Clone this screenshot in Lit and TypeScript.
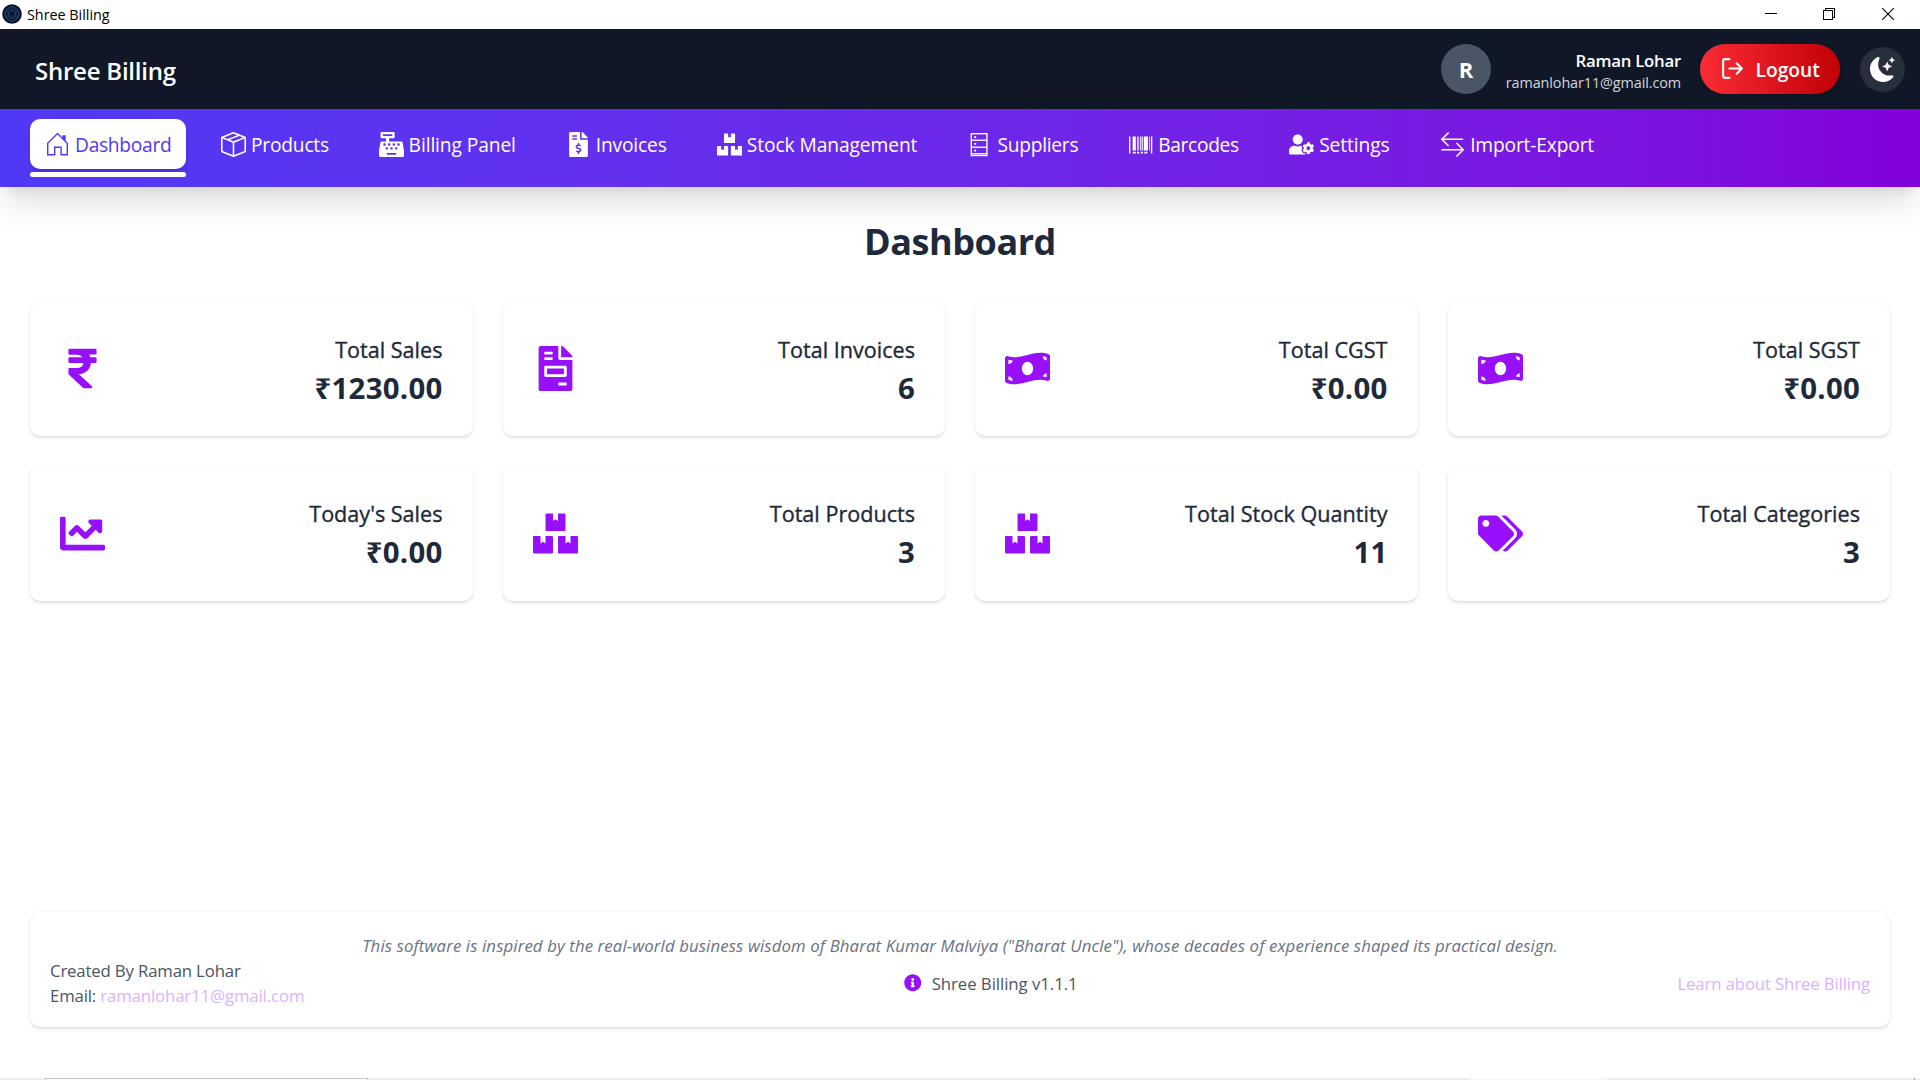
import { LitElement, html, svg, css, TemplateResult } from "lit";

type Glyph = { box: string; body: TemplateResult };

const glyph = (box: string, ...paths: string[]): Glyph => ({
  box,
  body: svg`${paths.map((d) => svg`<path fill="currentColor" d=${d}></path>`)}`,
});

const icons: Record<string, Glyph> = {
  home: {
    box: "0 0 25 25",
    body: svg`<path fill="none" stroke="currentColor" stroke-width="1.4" d="M2.7 22.8V11.2L12.5 1.6l9.8 9.6v11.6h-6.2v-7.6H9.7v7.6z"></path>
      <path fill="currentColor" d="M17.3 3.2h3.4v6.6l-3.4-3.2z"></path>`,
  },
  box: glyph(
    "0 0 16 16",
    "M8.186 1.113a.5.5 0 0 0-.372 0L1.846 3.5l2.404.961L10.404 2l-2.218-.887zm3.564 1.426L5.596 5 8 5.961 14.154 3.5l-2.404-.961zm3.25 1.7-6.5 2.6v7.922l6.5-2.6V4.24zM7.5 14.762V6.838L1 4.239v7.923l6.5 2.6zM7.443.184a1.5 1.5 0 0 1 1.114 0l7.129 2.852A.5.5 0 0 1 16 3.5v8.662a1 1 0 0 1-.629.928l-7.185 2.874a.5.5 0 0 1-.372 0L.63 13.09a1 1 0 0 1-.63-.928V3.5a.5.5 0 0 1 .314-.464L7.443.184z"
  ),
  register: glyph(
    "0 0 512 512",
    "M511.1 378.8l-26.7-160c-2.6-15.4-15.9-26.7-31.6-26.7H208v-64h96c8.8 0 16-7.2 16-16V16c0-8.8-7.2-16-16-16H48c-8.8 0-16 7.2-16 16v96c0 8.8 7.2 16 16 16h96v64H59.1c-15.6 0-29 11.3-31.6 26.7L.8 378.7c-.6 3.5-.9 7-.9 10.5V480c0 17.7 14.3 32 32 32h448c17.7 0 32-14.3 32-32v-90.7c.1-3.5-.2-7-.8-10.5zM280 248c0-8.8 7.2-16 16-16h16c8.8 0 16 7.2 16 16v16c0 8.8-7.2 16-16 16h-16c-8.8 0-16-7.2-16-16v-16zm-32 64h16c8.8 0 16 7.2 16 16v16c0 8.8-7.2 16-16 16h-16c-8.8 0-16-7.2-16-16v-16c0-8.8 7.2-16 16-16zm-32-80c8.8 0 16 7.2 16 16v16c0 8.8-7.2 16-16 16h-16c-8.8 0-16-7.2-16-16v-16c0-8.8 7.2-16 16-16h16zM80 80V48h192v32H80zm40 200h-16c-8.8 0-16-7.2-16-16v-16c0-8.8 7.2-16 16-16h16c8.8 0 16 7.2 16 16v16c0 8.8-7.2 16-16 16zm16 64v-16c0-8.8 7.2-16 16-16h16c8.8 0 16 7.2 16 16v16c0 8.8-7.2 16-16 16h-16c-8.8 0-16-7.2-16-16zm216 112c0 4.4-3.6 8-8 8H168c-4.4 0-8-3.6-8-8v-16c0-4.4 3.6-8 8-8h176c4.4 0 8 3.6 8 8v16zm24-112c0 8.8-7.2 16-16 16h-16c-8.8 0-16-7.2-16-16v-16c0-8.8 7.2-16 16-16h16c8.8 0 16 7.2 16 16v16zm48-80c0 8.8-7.2 16-16 16h-16c-8.8 0-16-7.2-16-16v-16c0-8.8 7.2-16 16-16h16c8.8 0 16 7.2 16 16v16z"
  ),
  invoiceDollar: glyph(
    "0 0 384 512",
    "M377 105L279.1 7c-4.5-4.5-10.6-7-17-7H256v128h128v-6.1c0-6.3-2.5-12.4-7-16.9zm-153 31V0H24C10.7 0 0 10.7 0 24v464c0 13.3 10.7 24 24 24h336c13.3 0 24-10.7 24-24V160H248c-13.2 0-24-10.8-24-24zM64 72c0-4.42 3.58-8 8-8h80c4.42 0 8 3.58 8 8v16c0 4.42-3.58 8-8 8H72c-4.42 0-8-3.58-8-8V72zm0 80v-16c0-4.42 3.58-8 8-8h80c4.42 0 8 3.58 8 8v16c0 4.42-3.58 8-8 8H72c-4.42 0-8-3.58-8-8zm144 263.88V440c0 4.42-3.58 8-8 8h-16c-4.42 0-8-3.58-8-8v-24.29c-11.29-.58-22.27-4.52-31.37-11.35-3.9-2.93-4.1-8.77-.57-12.14l11.75-11.21c2.77-2.64 6.89-2.76 10.13-.73 3.87 2.42 8.26 3.72 12.82 3.72h28.11c6.5 0 11.8-5.92 11.8-13.19 0-5.95-3.61-11.19-8.77-12.73l-45-13.5c-18.59-5.58-31.58-23.42-31.58-43.39 0-24.52 19.05-44.44 42.67-45.07V232c0-4.42 3.58-8 8-8h16c4.42 0 8 3.58 8 8v24.29c11.29.58 22.27 4.51 31.37 11.35 3.9 2.93 4.1 8.77.57 12.14l-11.75 11.21c-2.77 2.64-6.89 2.76-10.13.73-3.87-2.43-8.26-3.72-12.82-3.72h-28.11c-6.5 0-11.8 5.92-11.8 13.19 0 5.95 3.61 11.19 8.77 12.73l45 13.5c18.59 5.58 31.58 23.42 31.58 43.39 0 24.53-19.05 44.44-42.67 45.07z"
  ),
  boxes: glyph(
    "0 0 576 512",
    "M560 288h-80v96l-32-21.3-32 21.3v-96h-80c-8.8 0-16 7.2-16 16v192c0 8.8 7.2 16 16 16h224c8.8 0 16-7.2 16-16V304c0-8.8-7.2-16-16-16zm-384-64h224c8.8 0 16-7.2 16-16V16c0-8.8-7.2-16-16-16h-80v96l-32-21.3L256 96V0h-80c-8.8 0-16 7.2-16 16v192c0 8.8 7.2 16 16 16zm64 64h-80v96l-32-21.3L96 384v-96H16c-8.8 0-16 7.2-16 16v192c0 8.8 7.2 16 16 16h224c8.8 0 16-7.2 16-16V304c0-8.8-7.2-16-16-16z"
  ),
  cabinet: {
    box: "0 0 25 25",
    body: svg`<g fill="none" stroke="currentColor" stroke-width="1.4">
        <rect x="4.3" y="1.7" width="15.6" height="21.8"></rect>
        <path d="M4.3 8.3h15.6M4.3 15.2h15.6M4.3 21.8h15.6" stroke-opacity=".9"></path>
      </g>
      <g fill="currentColor"><circle cx="8.2" cy="5.2" r="1.1"></circle><circle cx="8.2" cy="11.8" r="1.1"></circle><circle cx="8.2" cy="18.6" r="1.1"></circle></g>`,
  },
  barcode: glyph(
    "0 0 25 25",
    "M1 4.4h1.4v17H1zM22.9 4.4h1.4v17h-1.4zM4.6 4.4h3.2v14H4.6zM9.2 4.4h1.4v14H9.2zM11.9 4.4h.9v14h-.9zM13.6 4.4h1.2v14h-1.2zM15.8 4.4H20v14h-4.2zM21.2 4.4h.7v14h-.7zM4.8 19.8h3v1.6h-3zM9 19.8h2.4v1.6H9zM12.9 19.8h2v1.6h-2zM16.4 19.8h3v1.6h-3z"
  ),
  userCog: glyph(
    "0 0 640 512",
    "M610.5 373.3c2.6-14.1 2.6-28.5 0-42.6l25.8-14.9c3-1.7 4.3-5.2 3.3-8.5-6.7-21.6-18.2-41.2-33.2-57.4-2.3-2.5-6-3.1-9-1.4l-25.8 14.9c-10.9-9.3-23.4-16.5-36.9-21.3v-29.8c0-3.4-2.4-6.4-5.7-7.1-22.3-5-45-4.8-66.2 0-3.3.7-5.7 3.7-5.7 7.1v29.8c-13.5 4.8-26 12-36.9 21.3l-25.8-14.9c-2.9-1.7-6.7-1.1-9 1.4-15 16.2-26.5 35.8-33.2 57.4-1 3.3.4 6.8 3.3 8.5l25.8 14.9c-2.6 14.1-2.6 28.5 0 42.6l-25.8 14.9c-3 1.7-4.3 5.2-3.3 8.5 6.7 21.6 18.2 41.1 33.2 57.4 2.3 2.5 6 3.1 9 1.4l25.8-14.9c10.9 9.3 23.4 16.5 36.9 21.3v29.8c0 3.4 2.4 6.4 5.7 7.1 22.3 5 45 4.8 66.2 0 3.3-.7 5.7-3.7 5.7-7.1v-29.8c13.5-4.8 26-12 36.9-21.3l25.8 14.9c2.9 1.7 6.7 1.1 9-1.4 15-16.2 26.5-35.8 33.2-57.4 1-3.3-.4-6.8-3.3-8.5l-25.8-14.9zM496 400.5c-26.8 0-48.5-21.8-48.5-48.5s21.8-48.5 48.5-48.5 48.5 21.8 48.5 48.5-21.7 48.5-48.5 48.5zM224 256c70.7 0 128-57.3 128-128S294.7 0 224 0 96 57.3 96 128s57.3 128 128 128zm201.2 226.5c-2.3-1.2-4.6-2.6-6.8-3.9l-7.9 4.6c-6 3.4-12.8 5.3-19.6 5.3-10.9 0-21.4-4.6-28.9-12.6-18.3-19.8-32.3-43.9-40.2-69.6-5.5-17.7 1.9-36.4 17.9-45.7l7.9-4.6c-.1-2.6-.1-5.2 0-7.8l-7.9-4.6c-16-9.2-23.4-28-17.9-45.7.9-2.9 2.2-5.8 3.2-8.7-3.8-.3-7.5-1.2-11.4-1.2h-16.7c-22.2 10.2-46.9 16-72.9 16s-50.6-5.8-72.9-16h-16.7C60.2 288 0 348.2 0 422.4V464c0 26.5 21.5 48 48 48h352c10.1 0 19.5-3.2 27.2-8.5-1.2-3.8-2-7.7-2-11.8v-9.2z"
  ),
  swap: {
    box: "0 0 25 25",
    body: svg`<path fill="none" stroke="currentColor" stroke-width="1.5" d="M8.6.6 1.8 7.3l6.8 6.7M1.8 7.3h21.4M16.4 11l6.8 6.8-6.8 6.7M23.2 17.8H1.4"></path>`,
  },
  rupee: glyph(
    "0 0 320 512",
    "M308 96c6.627 0 12-5.373 12-12V44c0-6.627-5.373-12-12-12H12C5.373 32 0 37.373 0 44v44.748c0 6.627 5.373 12 12 12h85.28c27.308 0 48.261 9.958 60.97 27.252H12c-6.627 0-12 5.373-12 12v40c0 6.627 5.373 12 12 12h158.757c-6.217 36.086-32.961 58.632-74.757 58.632H12c-6.627 0-12 5.373-12 12v53.012c0 3.349 1.4 6.546 3.861 8.818l165.052 152.356a12.001 12.001 0 0 0 8.139 3.182h82.562c10.924 0 16.166-13.408 8.139-20.818L116.871 319.906c76.499-2.34 131.144-53.395 138.318-127.906H308c6.627 0 12-5.373 12-12v-40c0-6.627-5.373-12-12-12h-58.69c-3.486-11.541-8.28-22.246-14.252-32H308z"
  ),
  invoice: glyph(
    "0 0 384 512",
    "M288 256H96v64h192v-64zm89-151L279.1 7c-4.5-4.5-10.6-7-17-7H256v128h128v-6.1c0-6.3-2.5-12.4-7-16.9zm-153 31V0H24C10.7 0 0 10.7 0 24v464c0 13.3 10.7 24 24 24h336c13.3 0 24-10.7 24-24V160H248c-13.2 0-24-10.8-24-24zM64 72c0-4.42 3.58-8 8-8h80c4.42 0 8 3.58 8 8v16c0 4.42-3.58 8-8 8H72c-4.42 0-8-3.58-8-8V72zm0 64c0-4.42 3.58-8 8-8h80c4.42 0 8 3.58 8 8v16c0 4.42-3.58 8-8 8H72c-4.42 0-8-3.58-8-8v-16zm256 304c0 4.42-3.58 8-8 8h-80c-4.42 0-8-3.58-8-8v-16c0-4.42 3.58-8 8-8h80c4.42 0 8 3.58 8 8v16zm0-200v96c0 8.84-7.16 16-16 16H80c-8.84 0-16-7.16-16-16v-96c0-8.84 7.16-16 16-16h224c8.84 0 16 7.16 16 16z"
  ),
  bill: glyph(
    "0 0 640 512",
    "M621.16 54.46C582.37 38.19 543.55 32 504.75 32c-123.17-.01-246.33 62.34-369.5 62.34-30.89 0-61.76-3.92-92.65-13.72-3.47-1.1-6.95-1.62-10.35-1.62C15.04 79 0 92.32 0 110.81v317.26c0 12.63 7.23 24.6 18.84 29.46C57.63 473.81 96.45 480 135.25 480c123.17 0 246.34-62.35 369.51-62.35 30.89 0 61.76 3.92 92.65 13.72 3.47 1.1 6.95 1.62 10.35 1.62 17.21 0 32.25-13.32 32.25-31.81V83.93c-.01-12.64-7.24-24.6-18.85-29.47zM48 132.22c20.12 5.04 41.12 7.57 62.72 8.93C104.84 170.54 79 192.69 48 192.69v-60.47zm0 285v-47.78c34.37 0 62.18 27.27 63.71 61.4-22.53-1.81-43.59-6.31-63.71-13.62zM320 352c-44.19 0-80-42.99-80-96 0-53.02 35.82-96 80-96s80 42.98 80 96c0 53.03-35.83 96-80 96zm272 27.78c-17.52-4.39-35.71-6.85-54.32-8.44 5.87-26.08 27.5-45.88 54.32-49.28v57.72zm0-236.11c-30.89-3.91-54.86-29.7-55.81-61.55 19.54 2.17 38.09 6.23 55.81 12.66v48.89z"
  ),
  chart: glyph(
    "0 0 512 512",
    "M496 384H64V80c0-8.84-7.16-16-16-16H16C7.16 64 0 71.16 0 80v336c0 17.67 14.33 32 32 32h464c8.84 0 16-7.16 16-16v-32c0-8.84-7.16-16-16-16zM464 96H345.94c-21.38 0-32.09 25.85-16.97 40.97l32.4 32.4L288 242.75l-73.37-73.37c-12.5-12.5-32.76-12.5-45.25 0l-68.69 68.69c-6.25 6.25-6.25 16.38 0 22.63l22.62 22.62c6.25 6.25 16.38 6.25 22.63 0L192 237.25l73.37 73.37c12.5 12.5 32.76 12.5 45.25 0l96-96 32.4 32.4c15.12 15.12 40.97 4.41 40.97-16.97V112c.01-8.84-7.15-16-15.99-16z"
  ),
  tags: glyph(
    "0 0 640 512",
    "M497.941 225.941L286.059 14.059A48 48 0 0 0 252.118 0H48C21.49 0 0 21.49 0 48v204.118a48 48 0 0 0 14.059 33.941l211.882 211.882c18.744 18.745 49.136 18.746 67.882 0l204.118-204.118c18.745-18.745 18.745-49.137 0-67.882zM112 160c-26.51 0-48-21.49-48-48s21.49-48 48-48 48 21.49 48 48-21.49 48-48 48zm513.941 133.823L421.823 497.941c-18.745 18.745-49.137 18.745-67.882 0l-.36-.36L527.64 323.522c16.999-16.999 26.362-39.6 26.362-63.64s-9.362-46.641-26.362-63.64L331.397 0h48.721a48 48 0 0 1 33.941 14.059l211.882 211.882c18.745 18.745 18.745 49.137 0 67.882z"
  ),
  info: glyph(
    "0 0 512 512",
    "M256 8C119.043 8 8 119.083 8 256c0 136.997 111.043 248 248 248s248-111.003 248-248C504 119.083 392.957 8 256 8zm0 110c23.196 0 42 18.804 42 42s-18.804 42-42 42-42-18.804-42-42 18.804-42 42-42zm56 254c0 6.627-5.373 12-12 12h-88c-6.627 0-12-5.373-12-12v-24c0-6.627 5.373-12 12-12h12v-64h-12c-6.627 0-12-5.373-12-12v-24c0-6.627 5.373-12 12-12h64c6.627 0 12 5.373 12 12v100h12c6.627 0 12 5.373 12 12v24z"
  ),
  logout: {
    box: "0 0 24 24",
    body: svg`<path fill="none" stroke="currentColor" stroke-width="2" stroke-linecap="round" stroke-linejoin="round" d="M9 21H5a2 2 0 0 1-2-2V5a2 2 0 0 1 2-2h4M16 17l5-5-5-5M21 12H9"></path>`,
  },
  moon: glyph(
    "0 0 16 16",
    "M6 .278a.768.768 0 0 1 .08.858 7.208 7.208 0 0 0-.878 3.46c0 4.021 3.278 7.277 7.318 7.277.527 0 1.04-.055 1.533-.16a.787.787 0 0 1 .81.316.733.733 0 0 1-.031.893A8.349 8.349 0 0 1 8.344 16C3.734 16 0 12.286 0 7.71 0 4.266 2.114 1.312 5.124.06A.752.752 0 0 1 6 .278z",
    "M10.794 3.148a.217.217 0 0 1 .412 0l.387 1.162c.173.518.579.924 1.097 1.097l1.162.387a.217.217 0 0 1 0 .412l-1.162.387a1.734 1.734 0 0 0-1.097 1.097l-.387 1.162a.217.217 0 0 1-.412 0l-.387-1.162A1.734 1.734 0 0 0 9.31 6.593l-1.162-.387a.217.217 0 0 1 0-.412l1.162-.387a1.734 1.734 0 0 0 1.097-1.097l.387-1.162zM13.863.099a.145.145 0 0 1 .274 0l.258.774c.115.346.386.617.732.732l.774.258a.145.145 0 0 1 0 .274l-.774.258a1.156 1.156 0 0 0-.732.732l-.258.774a.145.145 0 0 1-.274 0l-.258-.774a1.156 1.156 0 0 0-.732-.732l-.774-.258a.145.145 0 0 1 0-.274l.774-.258c.346-.115.617-.386.732-.732L13.863.1z"
  ),
  appMark: {
    box: "0 0 20 20",
    body: svg`<circle cx="10" cy="10" r="9.8" fill="#0b1322"></circle>
      <circle cx="10" cy="10" r="7.4" fill="#0e1f42" stroke="#173a66" stroke-width=".9" stroke-dasharray="2 1.2"></circle>
      <path fill="none" stroke="#21497a" stroke-width=".6" d="M10 2.5 16.5 6.3v7.4L10 17.5 3.5 13.7V6.3zM3.5 6.3l13 7.4M16.5 6.3l-13 7.4"></path>
      <circle cx="10" cy="10" r="3.6" fill="#0d1836" stroke="#24477c" stroke-width=".8"></circle>`,
  },
  minimize: {
    box: "0 0 12 12",
    body: svg`<path stroke="#000" stroke-width="1" d="M0 5.5h12" shape-rendering="crispEdges"></path>`,
  },
  restore: {
    box: "0 0 12 12",
    body: svg`<path fill="none" stroke="#000" stroke-width="1" shape-rendering="crispEdges" d="M.5 2.5h9v9h-9zM2.5 2.5v-2h9v9h-2"></path>`,
  },
  close: {
    box: "0 0 12 12",
    body: svg`<path fill="none" stroke="#000" stroke-width="1.1" d="M.2.2l11.6 11.6M11.8.2.2 11.8"></path>`,
  },
};

class AppIcon extends LitElement {
  static properties = { name: {} };
  declare name: string;
  static styles = css`
    :host { display: block; flex: none; width: 25px; height: 25px; }
    .glyph { display: block; width: 100%; height: 100%; overflow: visible; }
  `;
  render() {
    const g = icons[this.name];
    return html`<svg class="glyph" viewBox=${g.box}>${g.body}</svg>`;
  }
}
customElements.define("app-icon", AppIcon);

const tabs = [
  { icon: "home", label: "Dashboard", width: 96, tracking: -0.285, active: true },
  { icon: "box", label: "Products", width: 77.6, tracking: -0.209 },
  { icon: "register", label: "Billing Panel", width: 107.1, tracking: -0.1 },
  { icon: "invoiceDollar", label: "Invoices", width: 71.1, tracking: -0.152 },
  { icon: "boxes", label: "Stock Management", width: 170.6, tracking: -0.08 },
  { icon: "cabinet", label: "Suppliers", width: 80.8, tracking: -0.25 },
  { icon: "barcode", label: "Barcodes", width: 81, tracking: -0.33 },
  { icon: "userCog", label: "Settings", width: 71, tracking: -0.08 },
  { icon: "swap", label: "Import-Export", width: 124.5, tracking: -0.16 },
];

const stats = [
  { icon: "rupee", label: "Total Sales", value: "₹1230.00" },
  { icon: "invoice", label: "Total Invoices", value: "6" },
  { icon: "bill", label: "Total CGST", value: "₹0.00" },
  { icon: "bill", label: "Total SGST", value: "₹0.00" },
  { icon: "chart", label: "Today's Sales", value: "₹0.00" },
  { icon: "boxes", label: "Total Products", value: "3" },
  { icon: "boxes", label: "Total Stock Quantity", value: "11" },
  { icon: "tags", label: "Total Categories", value: "3" },
];

class AppRoot extends LitElement {
  static styles = css`
    :host {
      display: flex;
      flex-direction: column;
      height: 1080px;
      background: #fff;
      color: #1e2939;
      font-family: "Open Sans", "Noto Sans", sans-serif;
      white-space: nowrap;
      overflow: hidden;
    }
    * { box-sizing: border-box; }
    .titlebar {
      flex: none;
      height: 29px;
      display: flex;
      align-items: center;
      padding: 0 26px 1px 2px;
      color: #000;
      font-size: 14.4px;
      line-height: 20px;
    }
    .mark { width: 20px; height: 20px; }
    .window-name { flex: 1; padding-left: 5px; padding-top: 2px; letter-spacing: -0.03px; }
    .window-buttons { display: flex; gap: 47px; }
    .window-buttons app-icon { width: 12px; height: 12px; }
    .window-buttons app-icon:first-child { margin-right: -1px; }

    .header {
      flex: none;
      height: 80px;
      background: #101828;
      display: flex;
      align-items: center;
      padding: 0 15px 0 35px;
      color: #fff;
    }
    .brand { flex: 1; padding-top: 2px; font-size: 24px; line-height: 35px; font-weight: 600; letter-spacing: -0.23px; }
    .avatar {
      width: 50px; height: 50px; border-radius: 50%;
      margin-top: -1px;
      background: #4a5565;
      display: flex; align-items: center; justify-content: center;
      font-size: 22px; font-weight: 700;
    }
    .who { width: 190px; padding-top: 3px; text-align: right; }
    .who-name { font-size: 16.8px; line-height: 23px; font-weight: 600; letter-spacing: -0.25px; }
    .who-mail { font-size: 14.4px; line-height: 21px; color: #d1d5dc; letter-spacing: -0.1px; }
    .logout {
      width: 140px; height: 50px; border-radius: 25px;
      margin: -1px 20px 0 19px;
      padding: 0 20px;
      display: flex; align-items: center; gap: 10.5px;
      background: linear-gradient(to right, #fb2c36, #c10007);
      box-shadow: 0 5px 7px -1px rgba(0, 0, 0, 0.1), 0 2px 5px -2px rgba(0, 0, 0, 0.1);
      font-size: 19.2px; font-weight: 600;
    }
    .logout-text { padding-top: 2px; }
    .theme {
      width: 45px; height: 45px; border-radius: 50%;
      background: #272e3c;
      display: flex; align-items: center; justify-content: center;
    }

    .nav {
      flex: none;
      height: 78px;
      padding: 10px 30px;
      display: flex;
      gap: 20px;
      background: linear-gradient(to right in oklab, #4f39f6, #8200db);
      box-shadow: 0 25px 31px -6px rgba(0, 0, 0, 0.1), 0 10px 12.5px -7.5px rgba(0, 0, 0, 0.1);
      color: #fff;
    }
    .tab { display: flex; flex-direction: column; gap: 3px; }
    .tab-face {
      height: 50px; border-radius: 10px; padding: 0 15px;
      display: flex; align-items: center; gap: 5px;
      font-size: 19.2px; line-height: 30px;
    }
    .tab-line { height: 5px; border-radius: 3px; }
    .active .tab-face { background: #fff; color: #4f39f6; box-shadow: 0 5px 7px -1px rgba(0, 0, 0, 0.1), 0 2px 5px -2px rgba(0, 0, 0, 0.1); }
    .active .tab-line { background: #fff; }
    .tab-text { flex: none; padding-top: 1px; }

    .main { flex: 1; display: flex; flex-direction: column; padding: 32px 30px 51px; }
    .title { margin: 0 0 37.6px; text-align: center; font-size: 36px; line-height: 45px; font-weight: 700; letter-spacing: -0.45px; }
    .grid { display: grid; grid-template-columns: repeat(4, 1fr); gap: 30px; }
    .card {
      display: flex; align-items: center; justify-content: space-between;
      height: 134.5px; padding: 30px;
      border-radius: 10px;
      background: #fff;
      box-shadow: 0 1.25px 3.75px rgba(0, 0, 0, 0.1), 0 1.25px 2.5px -1.25px rgba(0, 0, 0, 0.1);
    }
    .card-icon { width: 45px; height: 45px; color: #9810fa; }
    .card-text { text-align: right; padding-top: 2px; }
    .card-label { font-size: 21.6px; line-height: 36px; -webkit-text-stroke: 0.35px #1e2939; }
    .card-value { font-size: 29.4px; line-height: 40px; font-weight: 700; letter-spacing: 0.25px; }

    .footer {
      margin-top: auto;
      padding: 21px 20px 19px;
      border-radius: 10px;
      box-shadow: 0 1.25px 3.75px rgba(0, 0, 0, 0.1), 0 1.25px 2.5px -1.25px rgba(0, 0, 0, 0.1);
      color: #4a5565;
      font-size: 16.8px;
      line-height: 25px;
      letter-spacing: -0.17px;
    }
    .tribute { text-align: center; font-style: italic; color: #6a7282; letter-spacing: 0.112px; }
    .credits { display: flex; align-items: center; justify-content: space-between; }
    .version { display: flex; align-items: center; gap: 10px; }
    .version-text { letter-spacing: -0.06px; }
    .version-icon { width: 17.5px; height: 17.5px; color: #9810fa; }
    .link { color: #dab2ff; }
    .mail { letter-spacing: -0.13px; }
    .about { letter-spacing: -0.14px; }

    .edge { flex: none; height: 2px; display: flex; background: #ececec; }
    .edge-search { width: 323px; margin-left: 45px; background: #fff; border: 1px solid #c4c4c4; border-bottom: 0; }
    .edge-tray { width: 137px; margin-left: 1102px; background: #f8f8f8; }
    .edge-peek { width: 1px; margin-left: 307px; background: #a8a8a8; }
  `;

  render() {
    return html`
      <div class="titlebar">
        <app-icon class="mark" name="appMark"></app-icon>
        <span class="window-name">Shree Billing</span>
        <div class="window-buttons">
          <app-icon name="minimize"></app-icon>
          <app-icon name="restore"></app-icon>
          <app-icon name="close"></app-icon>
        </div>
      </div>
      <header class="header">
        <div class="brand">Shree Billing</div>
        <div class="avatar">R</div>
        <div class="who">
          <div class="who-name">Raman Lohar</div>
          <div class="who-mail">ramanlohar11@gmail.com</div>
        </div>
        <div class="logout"><app-icon name="logout"></app-icon><span class="logout-text">Logout</span></div>
        <div class="theme"><app-icon name="moon"></app-icon></div>
      </header>
      <nav class="nav">
        ${tabs.map(
          (t) => html`<div class="tab ${t.active ? "active" : ""}">
            <div class="tab-face">
              <app-icon name=${t.icon}></app-icon>
              <span class="tab-text" style="width:${t.width}px;letter-spacing:${t.tracking}px">${t.label}</span>
            </div>
            <div class="tab-line"></div>
          </div>`
        )}
      </nav>
      <main class="main">
        <h1 class="title">Dashboard</h1>
        <section class="grid">
          ${stats.map(
            (s) => html`<div class="card">
              <app-icon class="card-icon" name=${s.icon}></app-icon>
              <div class="card-text">
                <div class="card-label">${s.label}</div>
                <div class="card-value">${s.value}</div>
              </div>
            </div>`
          )}
        </section>
        <footer class="footer">
          <div class="tribute">This software is inspired by the real-world business wisdom of Bharat Kumar Malviya ("Bharat Uncle"), whose decades of experience shaped its practical design.</div>
          <div class="credits">
            <div>
              <div>Created By Raman Lohar</div>
              <div>Email: <span class="link mail">ramanlohar11@gmail.com</span></div>
            </div>
            <div class="version"><app-icon class="version-icon" name="info"></app-icon><span class="version-text">Shree Billing v1.1.1</span></div>
            <span class="link about">Learn about Shree Billing</span>
          </div>
        </footer>
      </main>
      <div class="edge"><div class="edge-search"></div><div class="edge-tray"></div><div class="edge-peek"></div></div>
    `;
  }
}
customElements.define("app-root", AppRoot);
